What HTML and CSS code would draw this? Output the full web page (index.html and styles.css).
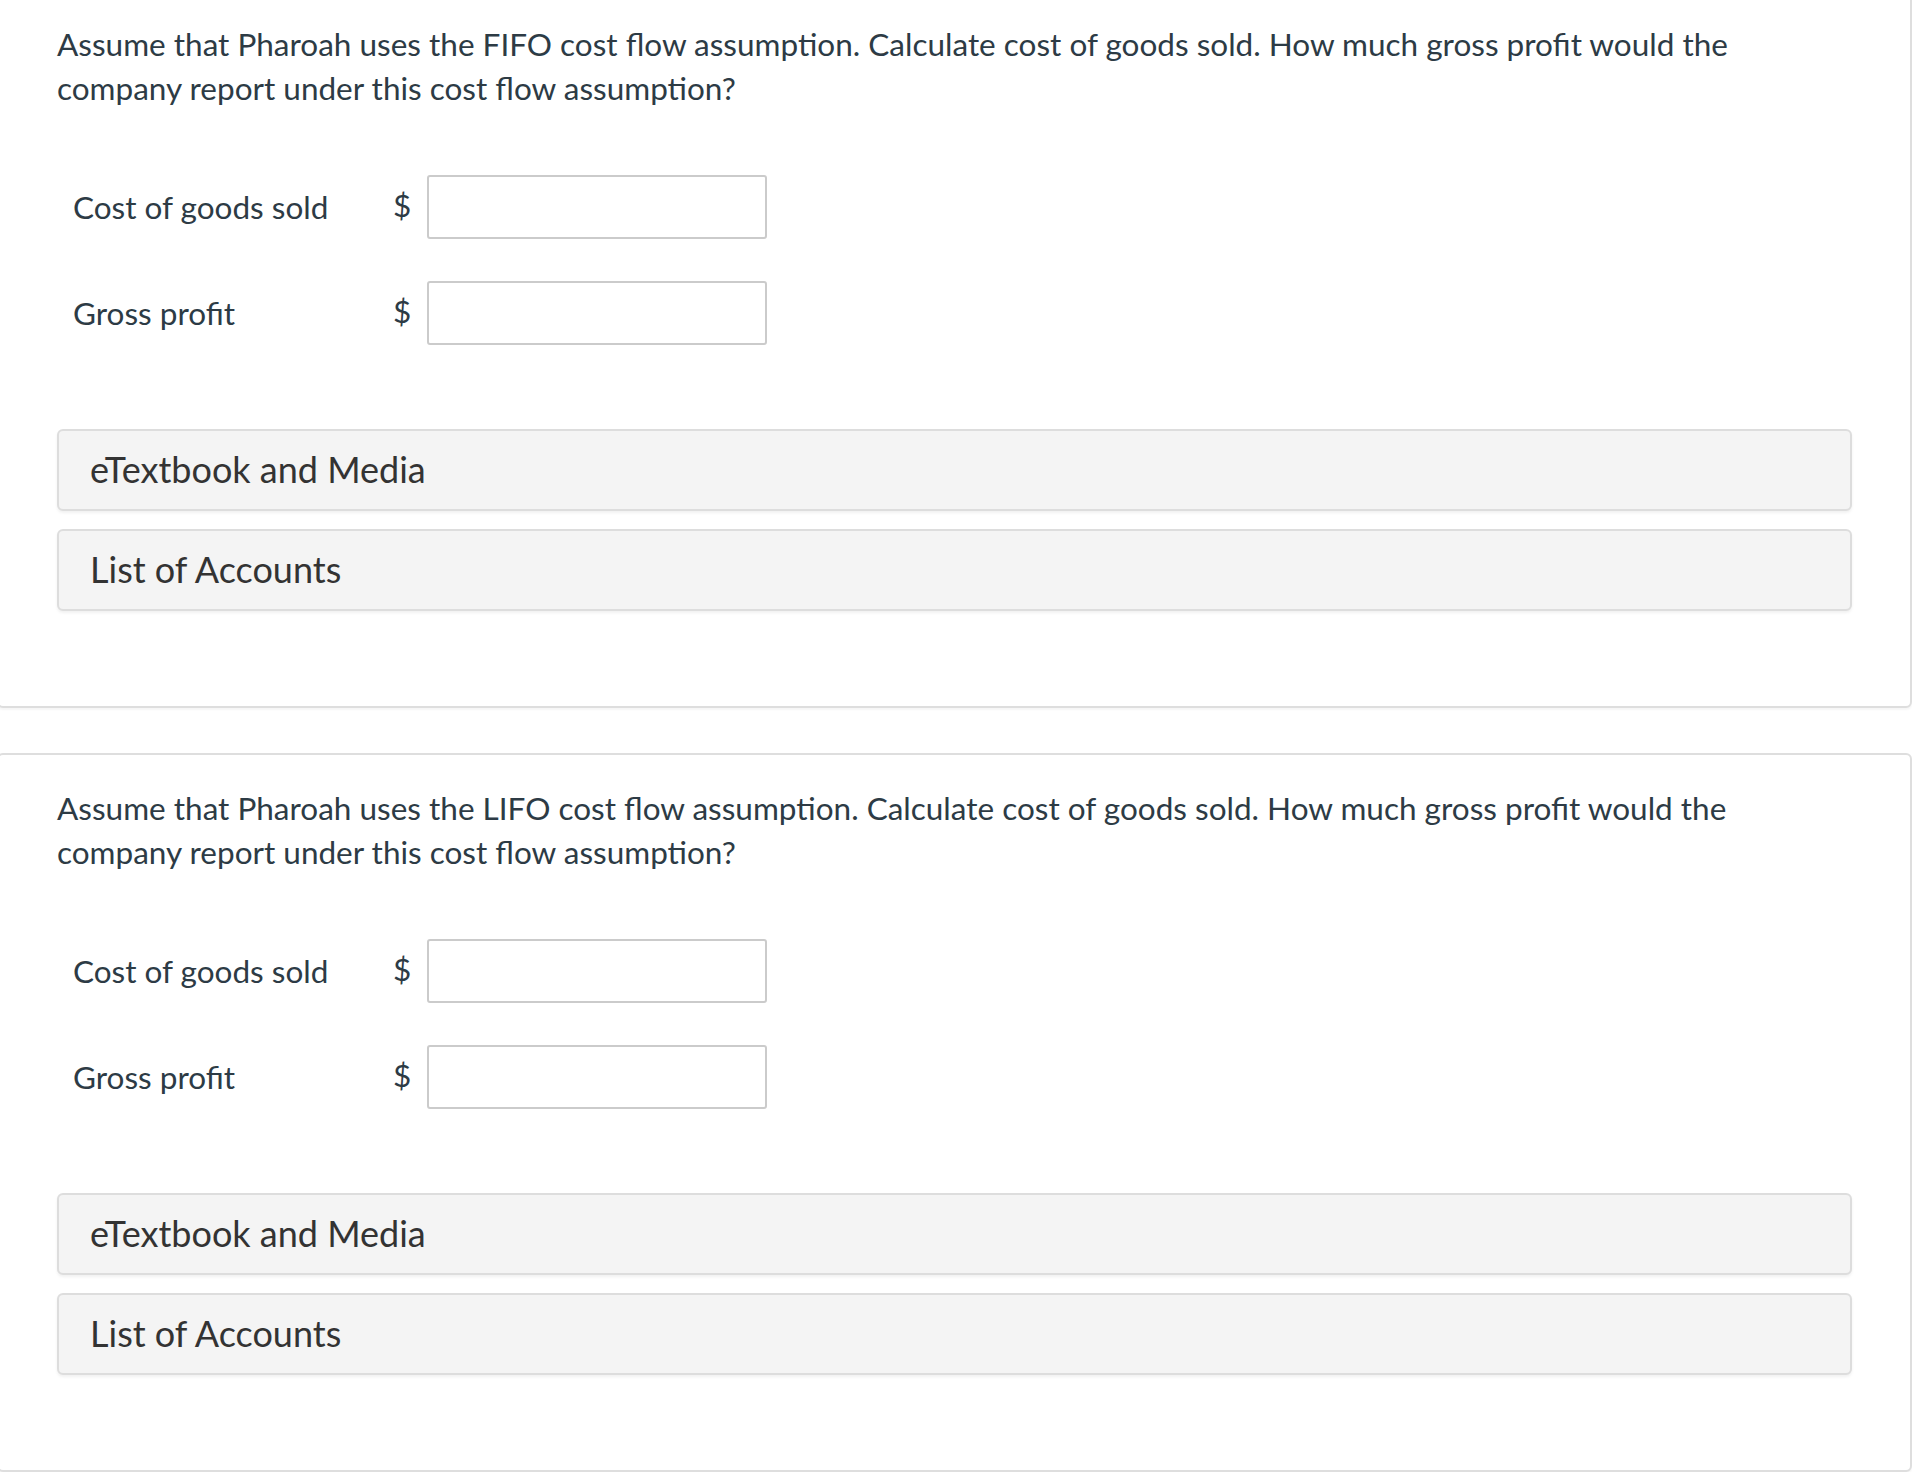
FILE: index.html
```html
<!DOCTYPE html>
<html lang="en">
<head>
<meta charset="utf-8">
<title>Cost flow assumption</title>
<link rel="stylesheet" href="styles.css">
</head>
<body>
<div class="page">
  <section class="card">
    <p class="question">Assume that Pharoah uses the FIFO cost flow assumption. Calculate cost of goods sold. How much gross profit would the company report under this cost flow assumption?</p>
    <div class="form">
      <div class="row">
        <span class="label">Cost of goods sold</span>
        <span class="cur">$</span>
        <input class="field" type="text" aria-label="Cost of goods sold">
      </div>
      <div class="row">
        <span class="label">Gross profit</span>
        <span class="cur">$</span>
        <input class="field" type="text" aria-label="Gross profit">
      </div>
    </div>
    <div class="panels">
      <div class="panel">eTextbook and Media</div>
      <div class="panel">List of Accounts</div>
    </div>
  </section>
  <section class="card">
    <p class="question">Assume that Pharoah uses the LIFO cost flow assumption. Calculate cost of goods sold. How much gross profit would the company report under this cost flow assumption?</p>
    <div class="form">
      <div class="row">
        <span class="label">Cost of goods sold</span>
        <span class="cur">$</span>
        <input class="field" type="text" aria-label="Cost of goods sold">
      </div>
      <div class="row">
        <span class="label">Gross profit</span>
        <span class="cur">$</span>
        <input class="field" type="text" aria-label="Gross profit">
      </div>
    </div>
    <div class="panels">
      <div class="panel">eTextbook and Media</div>
      <div class="panel">List of Accounts</div>
    </div>
  </section>
</div>
</body>
</html>
```

FILE: styles.css
```css
html, body {
  margin: 0;
  padding: 0;
  background: #ffffff;
  overflow: hidden;
}

body {
  font-family: Lato, "Open Sans", "Liberation Sans", sans-serif;
  color: #2d3b45;
}

.page {
  margin-top: -11px;
  margin-left: -3px;
  display: flex;
  flex-direction: column;
  gap: 45px;
}

.card {
  box-sizing: border-box;
  width: 1915px;
  border: 2px solid #dedede;
  border-radius: 6px;
  box-shadow: 0 2px 2px rgba(0, 0, 0, 0.04);
  padding: 31px 58px 95px 58px;
  background: #fff;
}

.question {
  margin: 0;
  max-width: 1710px;
  font-size: 31.5px;
  line-height: 44px;
  color: #2d3b45;
}

.form {
  margin-top: 65px;
  display: flex;
  flex-direction: column;
  gap: 42px;
  padding-left: 16px;
}

.row {
  display: flex;
  align-items: center;
  height: 64px;
}

.label {
  width: 320px;
  font-size: 31.5px;
  line-height: 40px;
  color: #2d3b45;
}

.cur {
  width: 34px;
  font-size: 31.5px;
  line-height: 40px;
  color: #2d3b45;
  margin-top: -4px;
}

.field {
  box-sizing: border-box;
  width: 340px;
  height: 64px;
  margin: 0;
  border: 2px solid #cbcbcb;
  border-radius: 3px;
  background: #fff;
  outline: none;
  padding: 0 10px;
  font-family: inherit;
  font-size: 29px;
}

.panels {
  margin-top: 84px;
  display: flex;
  flex-direction: column;
  gap: 18px;
}

.panel {
  box-sizing: border-box;
  height: 82px;
  display: flex;
  align-items: center;
  padding: 0 0 2px 31px;
  border: 2px solid #dddddd;
  border-radius: 6px;
  background: #f4f4f4;
  box-shadow: 0 2px 3px rgba(0, 0, 0, 0.06);
  font-size: 36px;
  line-height: 44px;
  color: #333333;
}
```
